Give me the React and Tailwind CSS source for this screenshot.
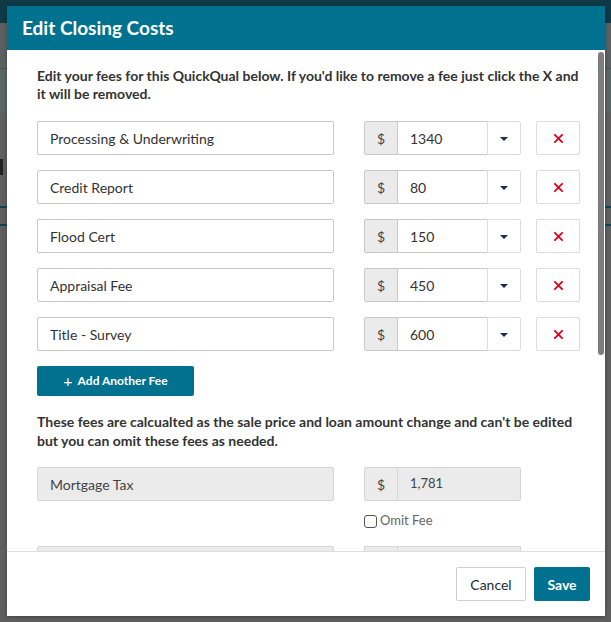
import React from "react";

const fees = [
  { name: "Processing & Underwriting", amount: "1340" },
  { name: "Credit Report", amount: "80" },
  { name: "Flood Cert", amount: "150" },
  { name: "Appraisal Fee", amount: "450" },
  { name: "Title - Survey", amount: "600" },
];

function Caret() {
  return (
    <svg width="8" height="4" viewBox="0 0 8 4">
      <path d="M0 0h8L4 4z" fill="#1d2b3f" />
    </svg>
  );
}

function Cross() {
  return (
    <svg width="9" height="9" viewBox="0 0 10 10">
      <path d="M1 1l8 8M9 1l-8 8" stroke="#e3001b" strokeWidth="2" strokeLinecap="square" />
    </svg>
  );
}

function FeeRow({ name, amount }) {
  return (
    <div className="flex items-center h-[34px]">
      <div className="w-[297px] h-full border border-[#c9c9c9] rounded-[2px] bg-white flex items-center pl-[12px] text-[14px] text-[#333]">
        {name}
      </div>
      <div className="ml-[30px] flex h-full">
        <div className="w-[34px] border border-[#c9c9c9] bg-[#ebebeb] rounded-l-[2px] flex items-center justify-center text-[14px] text-[#444]">
          $
        </div>
        <div className="w-[89px] border-y border-[#c9c9c9] bg-white flex items-center pl-[12px] text-[14px] text-[#333]">
          {amount}
        </div>
        <div className="w-[34px] border border-[#dcdcdc] rounded-r-[2px] bg-white flex items-center justify-center pt-[2px]">
          <Caret />
        </div>
      </div>
      <div className="ml-[15px] w-[44px] h-full border border-[#dcdcdc] rounded-[2px] bg-white flex items-center justify-center">
        <Cross />
      </div>
    </div>
  );
}

export default function App() {
  return (
    <div className="relative w-[611px] h-[622px] overflow-hidden bg-[#5f5f5f]" style={{ fontFamily: "Lato, 'Noto Sans', sans-serif" }}>
      {/* dimmed page behind the modal */}
      <div className="h-[23px] bg-[#0e3a47]" />
      <div className="h-[46px] bg-[#5b6161] border-b border-[#4d5252]" />
      <div className="h-[44px] bg-[#5a6565]" />
      <div className="h-[40px] bg-[#5e5e5e]" />
      <div className="h-[28px] bg-[#5e5e5e] flex items-center">
        <div className="w-[3px] h-[16px] bg-[#222]" />
      </div>
      <div className="h-[2px] bg-[#0f4556] mt-[25px]" />
      <div className="h-[2px] bg-[#0f4556] mt-[16px]" />

      {/* modal */}
      <div className="absolute left-[7px] top-[6px] w-[598px] h-[610px] bg-white flex flex-col shadow-[0_1px_4px_rgba(0,0,0,0.3)]">
        <div className="h-[44px] shrink-0 bg-[#00718f] flex items-center pl-[15px] text-white text-[19px] font-bold">
          Edit Closing Costs
        </div>

        <div className="relative flex-1 overflow-hidden pl-[30px] pt-[17px]">
          <p className="w-[545px] text-[14px] font-bold text-[#333] leading-[18px]">
            Edit your fees for this QuickQual below. If you'd like to remove a fee just click the X and it will be removed.
          </p>
          <div className="mt-[18px] flex flex-col gap-[15px]">
            {fees.map((f) => (
              <FeeRow key={f.name} {...f} />
            ))}
          </div>
          <button className="mt-[15px] w-[157px] h-[30px] bg-[#00718f] rounded-[2px] text-white text-[12px] font-bold flex items-center justify-center gap-[5px]">
            <span className="text-[16px] font-normal leading-none">+</span>
            Add Another Fee
          </button>
          <p className="mt-[16px] w-[545px] text-[14px] font-bold text-[#333] leading-[19px]">
            These fees are calcualted as the sale price and loan amount change and can't be edited but you can omit these fees as needed.
          </p>
          <div className="mt-[17px] flex h-[34px]">
            <div className="w-[297px] border border-[#d4d4d4] rounded-[2px] bg-[#ebebeb] flex items-center pl-[12px] text-[14px] text-[#444]">
              Mortgage Tax
            </div>
            <div className="ml-[30px] flex">
              <div className="w-[34px] border border-[#d4d4d4] bg-[#ebebeb] rounded-l-[2px] flex items-center justify-center text-[14px] text-[#444]">
                $
              </div>
              <div className="w-[123px] border-y border-r border-[#d4d4d4] bg-[#ebebeb] rounded-r-[2px] flex items-center pl-[12px] text-[13px] text-[#444]">
                1,781
              </div>
            </div>
          </div>
          <label className="mt-[12px] ml-[327px] h-[16px] flex items-center gap-[3px] text-[13px] text-[#666]">
            <span className="w-[13px] h-[13px] border border-[#555] rounded-[3px] bg-white" />
            Omit Fee
          </label>
          <div className="mt-[17px] flex h-[34px]">
            <div className="w-[297px] border border-[#d4d4d4] rounded-[2px] bg-[#ebebeb]" />
            <div className="ml-[30px] flex">
              <div className="w-[34px] border border-[#d4d4d4] bg-[#ebebeb]" />
              <div className="w-[123px] border-y border-r border-[#d4d4d4] bg-[#ebebeb]" />
            </div>
          </div>

          {/* overlay scrollbar */}
          <div className="absolute right-[1px] top-[2px] w-[6px] h-[303px] rounded-full bg-[#7d7d7d]" />
        </div>

        <div className="h-[65px] shrink-0 border-t border-[#dedede] flex items-center justify-end gap-[8px] pr-[15px]">
          <button className="w-[70px] h-[34px] border border-[#d0d0d0] rounded-[2px] bg-white text-[14px] text-[#1d2a3c]">
            Cancel
          </button>
          <button className="w-[56px] h-[34px] rounded-[2px] bg-[#00718f] text-[14px] font-bold text-white">
            Save
          </button>
        </div>
      </div>
    </div>
  );
}
